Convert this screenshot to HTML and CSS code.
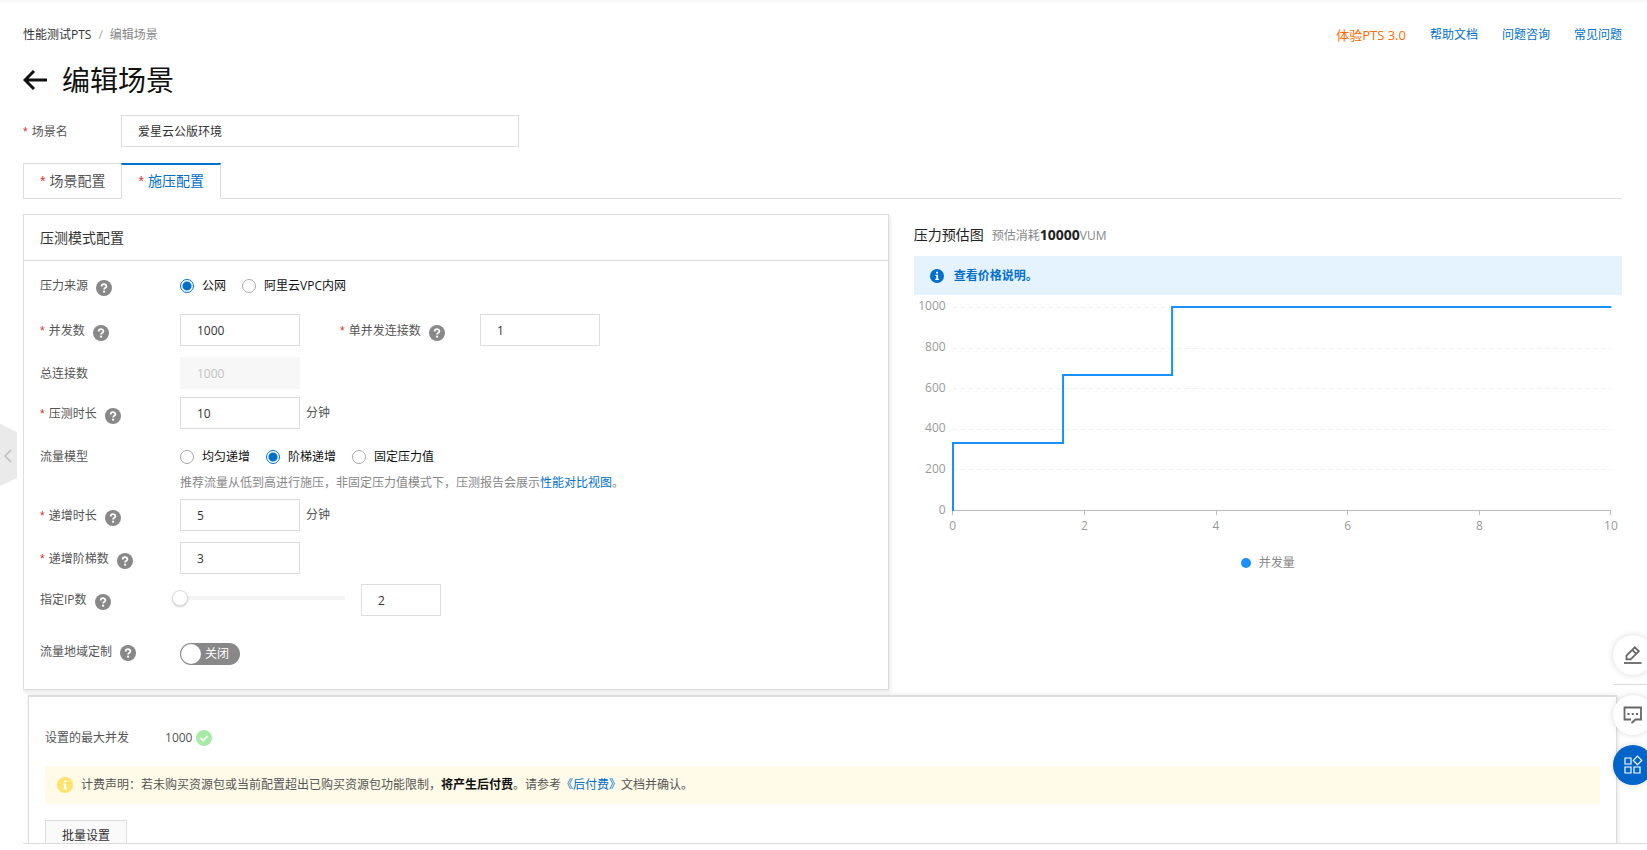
FILE: index.html
```html
<!DOCTYPE html>
<html lang="zh-CN">
<head>
<meta charset="utf-8">
<title>编辑场景</title>
<link rel="stylesheet" href="styles.css">
</head>
<body>
<svg class="defs" aria-hidden="true">
  <symbol id="help" viewBox="0 0 16 16">
    <circle cx="8" cy="8" r="8" fill="#888"/>
    <path d="M5.7 6.5C5.7 3.4 10.4 3.5 10.4 6.2C10.4 7.9 8.1 7.7 8.1 9.6" fill="none" stroke="#fff" stroke-width="1.8"/>
    <rect x="7.1" y="10.7" width="2" height="1.9" fill="#fff"/>
  </symbol>
  <symbol id="info" viewBox="0 0 16 16">
    <circle cx="8" cy="8" r="8" fill="currentColor"/>
    <path d="M7 3.2h2.2v2H7zM6.2 6.5h3v4.7h1v1.4H6v-1.4h1.1V7.9h-.9z" fill="#fff"/>
  </symbol>
</svg>
<div class="page">
  <main class="content">
    <header class="topbar">
      <nav class="crumbs" aria-label="面包屑">
        <a href="#">性能测试PTS</a><span class="slash">/</span><span class="current">编辑场景</span>
      </nav>
      <nav class="links" aria-label="帮助">
        <a class="promo" href="#">体验PTS 3.0</a>
        <a href="#">帮助文档</a>
        <a href="#">问题咨询</a>
        <a href="#">常见问题</a>
      </nav>
    </header>

    <div class="title">
      <button class="back" type="button" aria-label="返回">
        <svg width="24" height="20" viewBox="0 0 24 20"><path d="M24 10H2M11 1L2 10l9 9" fill="none" stroke="#111" stroke-width="3"/></svg>
      </button>
      <h1>编辑场景</h1>
    </div>

    <div class="scene">
      <label class="req" for="scene-name">场景名</label>
      <input class="field" id="scene-name" type="text" value="爱星云公版环境">
    </div>

    <div class="tabs" role="tablist">
      <button class="tab req" type="button" role="tab" aria-selected="false">场景配置</button>
      <button class="tab req active" type="button" role="tab" aria-selected="true">施压配置</button>
    </div>

    <div class="columns">
      <section class="card">
        <h2>压测模式配置</h2>
        <form class="form">
          <div class="row source">
            <div class="name"><span>压力来源</span><svg class="icon"><use href="#help"/></svg></div>
            <div class="radios">
              <label><input type="radio" name="source" checked>公网</label>
              <label><input type="radio" name="source">阿里云VPC内网</label>
            </div>
          </div>
          <div class="row">
            <div class="name"><label class="req" for="users">并发数</label><svg class="icon"><use href="#help"/></svg></div>
            <input class="field" id="users" type="text" value="1000">
            <div class="name second"><label class="req" for="conn">单并发连接数</label><svg class="icon"><use href="#help"/></svg></div>
            <input class="field" id="conn" type="text" value="1">
          </div>
          <div class="row tight">
            <div class="name"><label for="total">总连接数</label></div>
            <input class="field" id="total" type="text" value="1000" disabled>
          </div>
          <div class="row">
            <div class="name"><label class="req" for="duration">压测时长</label><svg class="icon"><use href="#help"/></svg></div>
            <input class="field" id="duration" type="text" value="10">
            <span class="unit">分钟</span>
          </div>
          <div class="row model">
            <div class="name"><span>流量模型</span></div>
            <div>
              <div class="radios">
                <label><input type="radio" name="model">均匀递增</label>
                <label><input type="radio" name="model" checked>阶梯递增</label>
                <label><input type="radio" name="model">固定压力值</label>
              </div>
              <p class="hint">推荐流量从低到高进行施压，非固定压力值模式下，压测报告会展示<a href="#">性能对比视图</a>。</p>
            </div>
          </div>
          <div class="row">
            <div class="name"><label class="req" for="ramp">递增时长</label><svg class="icon"><use href="#help"/></svg></div>
            <input class="field" id="ramp" type="text" value="5">
            <span class="unit">分钟</span>
          </div>
          <div class="row steps">
            <div class="name"><label class="req" for="steps">递增阶梯数</label><svg class="icon"><use href="#help"/></svg></div>
            <input class="field" id="steps" type="text" value="3">
          </div>
          <div class="row ip">
            <div class="name"><label for="ips">指定IP数</label><svg class="icon"><use href="#help"/></svg></div>
            <input class="slider" type="range" min="2" max="100" value="2" aria-label="指定IP数">
            <input class="field small" id="ips" type="text" value="2">
          </div>
          <div class="row region">
            <div class="name"><span>流量地域定制</span><svg class="icon"><use href="#help"/></svg></div>
            <button class="switch" type="button" role="switch" aria-checked="false"><span class="knob"></span>关闭</button>
          </div>
        </form>
      </section>

      <section class="estimate">
        <div class="estimate-head"><h2>压力预估图</h2><span>预估消耗<b>10000</b>VUM</span></div>
        <a class="price" href="#"><svg class="icon small"><use href="#info"/></svg>查看价格说明。</a>
        <div class="chart">
          <div class="y-axis"><span>1000</span><span>800</span><span>600</span><span>400</span><span>200</span><span>0</span></div>
          <svg class="plot" viewBox="0 0 658 204" preserveAspectRatio="none" role="img" aria-label="并发量阶梯图">
            <path class="grid" d="M0 .5H658M0 41.500H658M0 81.500H658M0 122.500H658M0 162.500H658"/>
            <path class="axis" d="M0 203.500H658"/>
            <path class="line" d="M0 204V136H110V68H219V0H658"/>
          </svg>
          <div class="x-axis"><span>0</span><span>2</span><span>4</span><span>6</span><span>8</span><span>10</span></div>
        </div>
        <div class="legend"><i></i>并发量</div>
      </section>
    </div>

    <section class="summary">
      <div class="max"><span>设置的最大并发</span><span class="value">1000</span>
        <svg class="icon" viewBox="0 0 16 16"><circle cx="8" cy="8" r="8" fill="#a7eba7"/><path d="M4.500 8l2.700 2.600L11.700 6" fill="none" stroke="#fff" stroke-width="1.500"/></svg>
      </div>
      <div class="notice">
        <svg class="icon"><use href="#info"/></svg>
        <p>计费声明：若未购买资源包或当前配置超出已购买资源包功能限制，<b>将产生后付费</b>。请参考<a href="#">《后付费》</a>文档并确认。</p>
      </div>
      <button class="batch" type="button">批量设置</button>
    </section>
  </main>
</div>

<button class="drawer" type="button" aria-label="展开侧栏">
  <svg width="17" height="62" viewBox="0 0 17 62"><path d="M0 0L17 8V54L0 62z" fill="#eaeaea"/><path d="M11 26L5 32l6 6" fill="none" stroke="#bbb" stroke-width="1.500"/></svg>
</button>

<div class="float">
  <button type="button" aria-label="编辑">
    <svg width="20" height="20" viewBox="0 0 20 20" fill="none" stroke="#666" stroke-width="1.800"><path d="M1 18H18.500"/><path d="M3.500 14.300V10.600L11.800 2.300L15.800 6.300L7.600 14.300zM9.300 4.800L13.300 8.800"/></svg>
  </button>
  <hr>
  <button type="button" aria-label="反馈">
    <svg width="20" height="20" viewBox="0 0 20 20" fill="none" stroke="#666" stroke-width="1.800"><path d="M8 14.500H1.500V2.500H18V14.500H12.500L8.500 18"/><path d="M4.500 9h2M8.800 9h2M13 9h2" stroke-width="2"/></svg>
  </button>
  <button class="primary" type="button" aria-label="应用">
    <svg width="20" height="20" viewBox="0 0 20 20" fill="none" stroke="#fff" stroke-width="1.200"><path d="M2 3h6v6H2zM2 12h6v6H2zM11 12h6v6h-6zM14.500 1.200L18.700 5.400L14.500 9.600L10.300 5.400z"/></svg>
  </button>
</div>
</body>
</html>
```
FILE: styles.css
```css
* { box-sizing: border-box; }
body {
  margin: 0;
  color: #555;
  background: #fff;
  font: 12px/18px "Open Sans", "Noto Sans CJK SC", sans-serif;
}
a { color: #0070cc; text-decoration: none; }
button, input { font: inherit; color: inherit; }
button { padding: 0; border: 0; background: none; }
h1, h2, p { margin: 0; font-weight: 400; }
.defs { position: absolute; width: 0; height: 0; }
.page {
  display: flex;
  flex-direction: column;
  height: 100vh;
  padding: 0 0 6px 23px;
  border-top: 2px solid #f7f7f7;
}
.content {
  flex: 1;
  min-height: 0;
  overflow: hidden;
  padding-right: 25px;
  border-bottom: 1px solid #ddd;
}
.icon { flex: none; width: 16px; height: 16px; }
.icon.small { width: 14px; height: 14px; }

.topbar { display: flex; justify-content: space-between; padding-top: 24px; }
.crumbs a { color: #333; }
.crumbs .slash { margin: 0 7px; color: #aaa; }
.crumbs .current { color: #888; }
.links { display: flex; align-items: center; gap: 24px; }
.links .promo { color: #ff6a00; font-size: 13px; }

.title { display: flex; align-items: center; gap: 15px; margin-top: 16px; }
.title h1 { color: #111; font-size: 28px; line-height: 40px; }
.back { display: flex; }

.req::before {
  content: "*";
  margin-right: 4px;
  color: #d93026;
  font-family: "Liberation Sans", sans-serif;
}
.scene { display: flex; align-items: center; margin-top: 15px; }
.scene label { width: 98px; padding-top: 2px; }
.field {
  width: 120px;
  height: 32px;
  padding: 0 16px;
  border: 1px solid #ddd;
  background: #fff;
  color: #333;
  outline: 0;
}
.scene .field { width: 398px; }
.field:disabled { border-color: #f7f7f7; background: #f7f7f7; color: #c1c1c1; }
.field.small { width: 80px; }

.tabs { display: flex; margin-top: 16px; border-bottom: 1px solid #ddd; }
.tab {
  height: 36px;
  margin-bottom: -1px;
  padding: 0 16px;
  border: 1px solid #ddd;
  font-size: 14px;
}
.tab.active {
  margin-left: -1px;
  padding-bottom: 2px;
  border-top: 2px solid #0070cc;
  border-bottom-color: #fff;
  background: #fff;
  color: #0070cc;
}

.columns {
  display: grid;
  grid-template-columns: 55fr 45fr;
  gap: 25px;
  align-items: start;
  margin-top: 15px;
}
.card { border: 1px solid #ddd; box-shadow: 1px 2px 4px rgba(0, 0, 0, .1); }
.card h2 {
  padding: 13px 16px 12px;
  border-bottom: 1px solid #ddd;
  color: #333;
  font-size: 14px;
  line-height: 20px;
}
.form { display: flex; flex-direction: column; padding: 15px 16px 24px; }
.row { display: flex; align-items: center; margin-bottom: 11px; }
.row.tight { margin-bottom: 8px; }
.row.steps { margin-bottom: 10px; }
.name { display: flex; align-items: center; gap: 8px; width: 140px; padding-top: 2px; }
.name .icon { margin-top: 4px; }
.name.second { margin-left: 40px; }
.unit { margin-left: 6px; }
.row.source { margin-bottom: 18px; }
.source .name, .model .name, .ip .name { padding-top: 0; }
.radios { display: flex; gap: 16px; color: #111; }
.radios label { display: flex; align-items: center; gap: 8px; }
.radios input {
  appearance: none;
  width: 14px;
  height: 14px;
  margin: 0;
  border: 1px solid #aaa;
  border-radius: 50%;
}
.radios input:checked {
  border-color: #0070cc;
  background: radial-gradient(circle, #0070cc 4px, #fff 5px);
}
.row.model { align-items: flex-start; margin: 8px 0 7px; }
.hint { margin-top: 8px; color: #888; }
.row.ip { margin-bottom: 27px; }
.slider { appearance: none; width: 173px; height: 16px; margin: 0 16px 4px -8px; background: none; }
.slider::-webkit-slider-runnable-track {
  height: 16px;
  background: linear-gradient(#f4f4f4, #f4f4f4) 8px 6px / 100% 4px no-repeat;
}
.slider::-webkit-slider-thumb {
  appearance: none;
  width: 16px;
  height: 16px;
  border: 1px solid #ddd;
  border-radius: 50%;
  background: #fff;
  box-shadow: 0 1px 2px rgba(0, 0, 0, .2);
}
.row.region { margin-bottom: 0; }
.region .name { padding: 0 0 4px; }
.region .name .icon { margin-top: 2px; }
.switch {
  display: flex;
  align-items: center;
  gap: 4px;
  width: 60px;
  height: 22px;
  padding: 1px;
  border-radius: 11px;
  background: #888;
  color: #fff;
}
.knob { width: 20px; height: 20px; border-radius: 50%; background: #fff; }

.estimate-head { display: flex; align-items: center; gap: 8px; margin-top: 11px; color: #888; }
.estimate-head h2 { color: #222; font-size: 14px; line-height: 20px; }
.estimate-head b { color: #222; font-size: 14px; }
.price {
  display: flex;
  align-items: center;
  gap: 10px;
  height: 39px;
  margin-top: 11px;
  padding: 0 16px;
  background: #e5f3ff;
  font-weight: 700;
}
.chart {
  display: grid;
  grid-template-columns: 32px 1fr;
  column-gap: 7px;
  margin: 12px 11px 0 0;
  color: #999;
}
.y-axis { display: flex; flex-direction: column; justify-content: space-between; margin: -10px 0 -8px; text-align: right; }
.plot { width: 100%; height: 204px; overflow: visible; fill: none; }
.grid { stroke: #eee; stroke-dasharray: 4 4; }
.axis { stroke: #bbb; }
.line { stroke: #1890ff; stroke-width: 2; }
.x-axis { grid-column: 2; display: flex; justify-content: space-between; margin: 0 -10px; }
.x-axis span { width: 20px; text-align: center; }
.x-axis span::before { content: ""; display: block; width: 1px; height: 4px; margin: 0 auto 2px; background: #bbb; }
.legend { display: flex; align-items: center; justify-content: center; gap: 8px; margin-top: 19px; color: #888; }
.legend i { width: 10px; height: 10px; border-radius: 50%; background: #1890ff; }

.summary {
  margin: 5px 5px 0;
  padding: 32px 16px;
  border: 1px solid #ddd;
  border-top-width: 2px;
  box-shadow: 1px 0 4px rgba(0, 0, 0, .1);
}
.max { display: flex; align-items: center; }
.max .value { margin: 0 4px 0 36px; }
.notice {
  display: flex;
  align-items: center;
  gap: 8px;
  height: 38px;
  margin-top: 19px;
  padding: 0 12px;
  background: #fffbe8;
  color: #555;
}
.notice .icon { color: #ffe36b; }
.notice b { color: #111; }
.batch { height: 32px; margin-top: 16px; padding: 0 16px; border: 1px solid #ddd; background: #fafafa; color: #333; }

.drawer { position: fixed; top: 424px; left: 0; display: flex; }
.float { position: fixed; right: -6px; bottom: 65px; width: 40px; }
.float button {
  display: flex;
  align-items: center;
  justify-content: center;
  width: 40px;
  height: 40px;
  border-radius: 50%;
  background: #fff;
  box-shadow: 0 0 6px rgba(0, 0, 0, .15);
}
.float hr { height: 1px; margin: 9px 0 10px; border: 0; background: #ddd; }
.float .primary { margin-top: 10px; background: #0064c8; }
```
